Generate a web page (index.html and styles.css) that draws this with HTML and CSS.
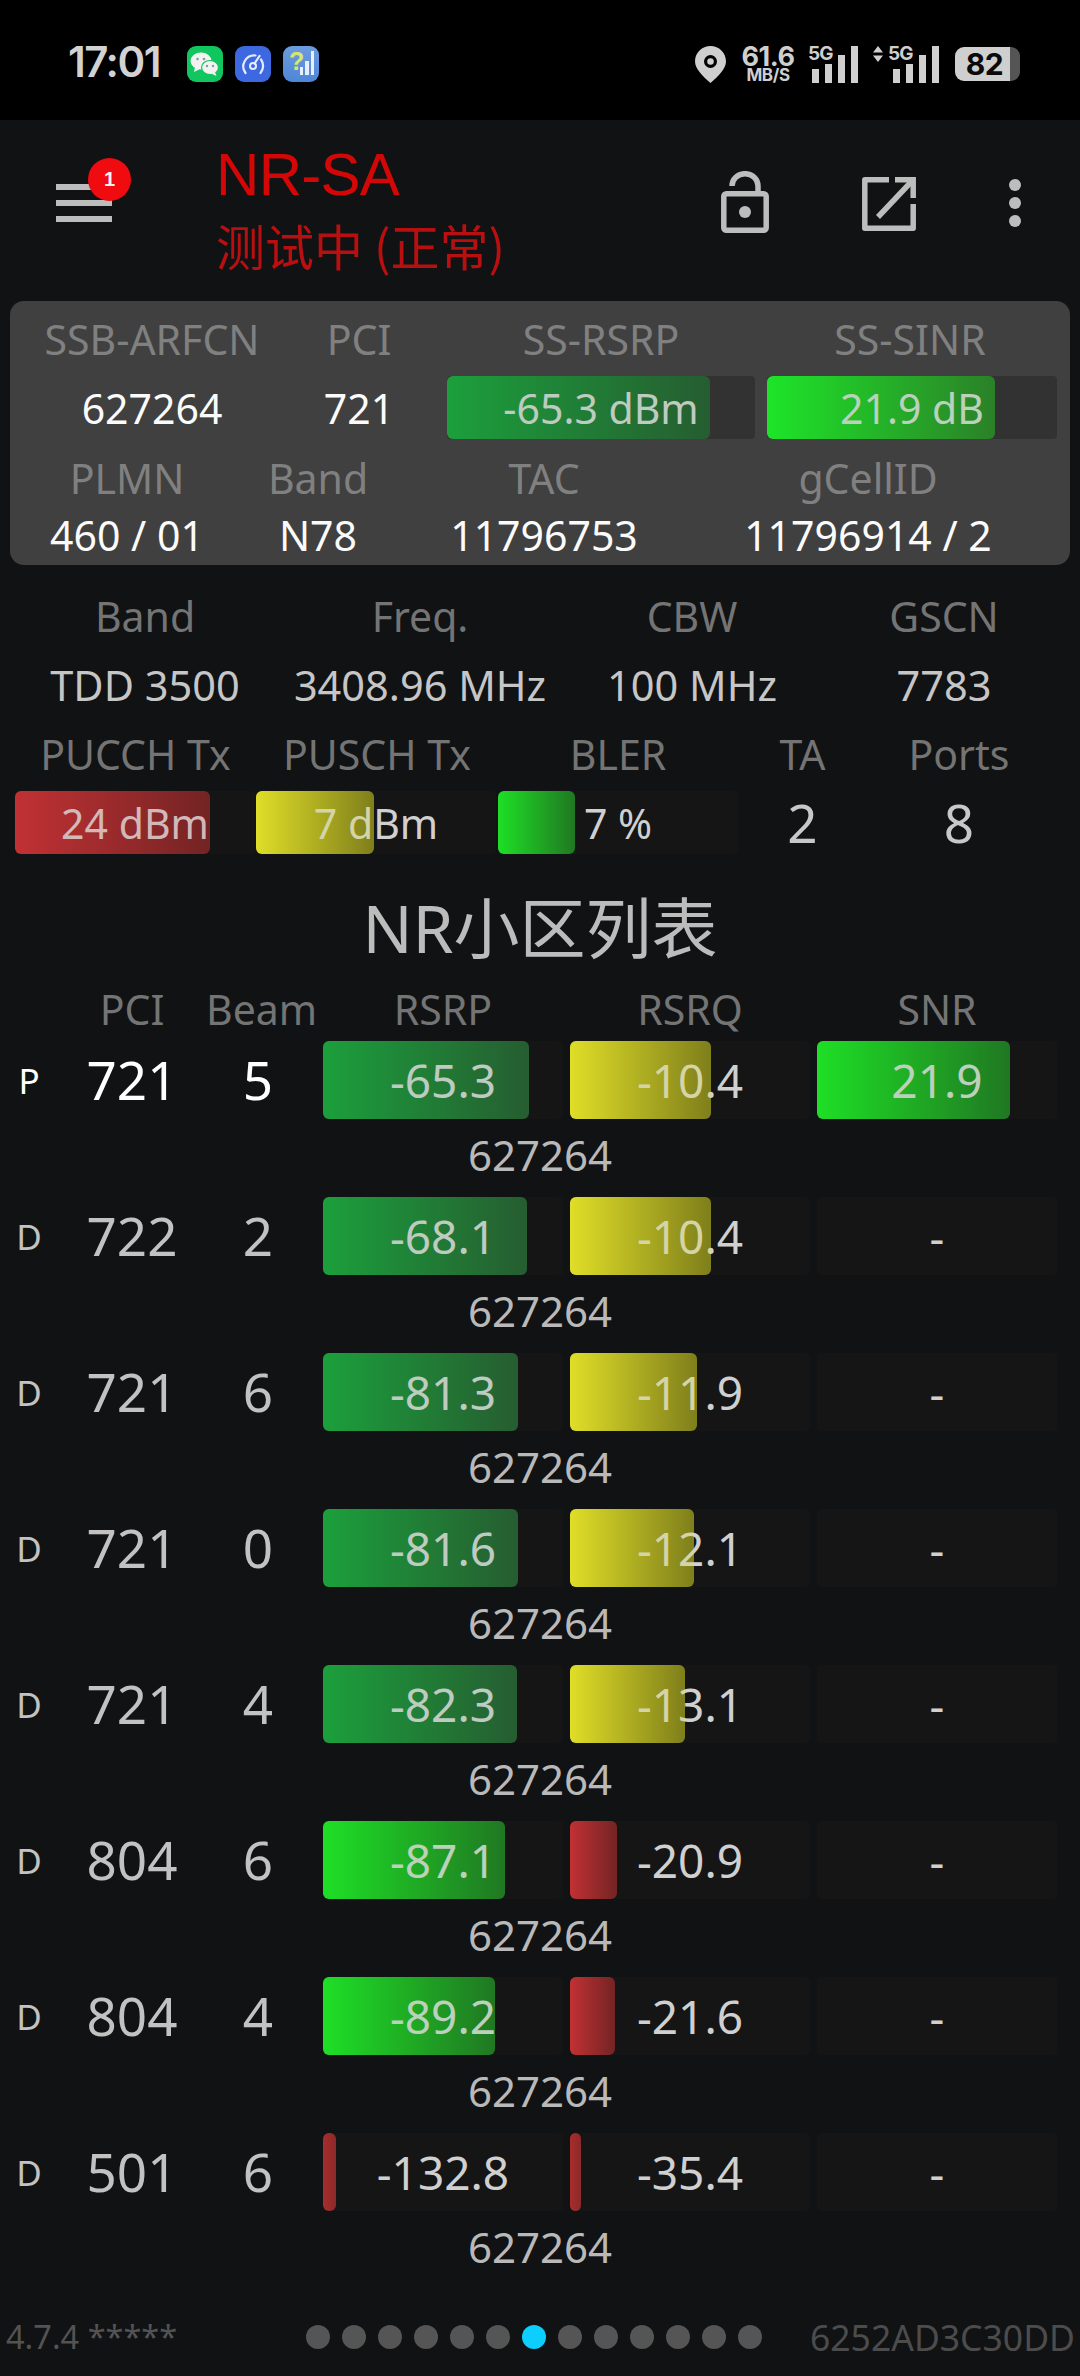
FILE: index.html
```html
<!DOCTYPE html>
<html lang="zh">
<head>
<meta charset="utf-8">
<title>NR-SA</title>
<link rel="stylesheet" href="styles.css">
</head>
<body>
<div class="page">
  <header class="status">
    <div class="status-left">
      <span class="time">17:01</span>
      <div class="apps">
        <svg class="app" viewBox="0 0 36 36"><rect width="36" height="36" rx="9" fill="#12c65f"/><ellipse cx="14" cy="15" rx="10.500" ry="8.500" fill="#f2f2f2"/><path d="M8 21l-1 5 6-3z" fill="#f2f2f2"/><ellipse cx="23" cy="21.500" rx="8.500" ry="7" fill="#f2f2f2" stroke="#12c65f" stroke-width="1.200"/><path d="M28 26l1.500 4-5.500-2.500z" fill="#f2f2f2"/><circle cx="10.500" cy="13" r="1.300" fill="#8a9a90"/><circle cx="17" cy="13" r="1.300" fill="#8a9a90"/><circle cx="20" cy="20" r="1.200" fill="#8a9a90"/><circle cx="26" cy="20" r="1.200" fill="#8a9a90"/></svg>
        <svg class="app" viewBox="0 0 36 36"><rect width="36" height="36" rx="9" fill="#3d68e0"/><path d="M10.500 27a11 11 0 0 1 10-17.500M26 13.500a11 11 0 0 1-.5 13.500" fill="none" stroke="#e6ecff" stroke-width="2.200" stroke-linecap="round"/><circle cx="18" cy="20" r="3" fill="none" stroke="#e6ecff" stroke-width="2"/><path d="M19.500 17.500l5-7.500" stroke="#e6ecff" stroke-width="2.200" stroke-linecap="round"/></svg>
        <div class="app app-net">
          <span class="q">?</span>
          <i class="nb nb1"></i><i class="nb nb2"></i><i class="nb nb3"></i>
        </div>
      </div>
    </div>
    <div class="status-right">
      <svg class="pin" viewBox="0 0 31 37"><path fill-rule="evenodd" fill="#cfcfcf" d="M15.500 0C7 0 0 6.800 0 15.300 0 23 8 30.500 15.500 37 23 30.500 31 23 31 15.300 31 6.800 24 0 15.500 0zm0 9a6.500 6.500 0 1 1 0 13 6.500 6.500 0 0 1 0-13zm0 3.200a3.300 3.300 0 1 0 0 6.600 3.300 3.300 0 0 0 0-6.600z"/></svg>
      <div class="speed"><span class="speed-n">61.6</span><span class="speed-u">MB/S</span></div>
      <div class="sig">
        <span class="g5">5G</span>
        <div class="bars"><i class="b1"></i><i class="b2"></i><i class="b3"></i><i class="b4"></i></div>
      </div>
      <div class="sig sig2">
        <svg class="updn" viewBox="0 0 10 16"><path d="M5 0l5 6.500H0zM5 16l5-6.500H0z" fill="#cfcfcf"/></svg>
        <span class="g5">5G</span>
        <div class="bars"><i class="b1"></i><i class="b2"></i><i class="b3"></i><i class="b4"></i></div>
      </div>
      <div class="batt"><span class="batt-n">82</span></div>
    </div>
  </header>

  <div class="appbar">
    <div class="menu">
      <span class="ham"><i></i><i></i><i></i></span>
      <span class="badge">1</span>
    </div>
    <div class="titles">
      <div class="title">NR-SA</div>
      <div class="subtitle">测试中 (正常)</div>
    </div>
    <div class="actions">
      <svg class="ic-lock" viewBox="0 0 48 62"><path d="M11 15a13 12.300 0 0 1 26 0v8" fill="none" stroke="#bdbdbd" stroke-width="5.500"/><rect x="2.800" y="22.800" width="42.400" height="36.400" rx="2.500" fill="none" stroke="#bdbdbd" stroke-width="5.500"/><circle cx="24" cy="41" r="6" fill="#bdbdbd"/></svg>
      <svg class="ic-open" viewBox="0 0 54 54"><path d="M27 2.800H2.800v48.400h48.400V27" fill="none" stroke="#bdbdbd" stroke-width="5.500" stroke-linejoin="round"/><path d="M33 2.800h18.200V21" fill="none" stroke="#bdbdbd" stroke-width="5.500"/><path d="M49.500 4.500L16 40" fill="none" stroke="#bdbdbd" stroke-width="5.500"/></svg>
      <span class="kebab"><i></i><i></i><i></i></span>
    </div>
  </div>

  <section class="card">
    <div class="g1">
      <div class="lab">SSB-ARFCN</div><div class="lab">PCI</div><div class="lab">SS-RSRP</div><div class="lab">SS-SINR</div>
      <div class="v">627264</div><div class="v">721</div>
      <div class="track t-card c-green" style="--w:263px"><span>-65.3 dBm</span></div>
      <div class="track t-card c-lime" style="--w:228px"><span>21.9 dB</span></div>
    </div>
    <div class="g2">
      <div class="lab">PLMN</div><div class="lab">Band</div><div class="lab">TAC</div><div class="lab">gCellID</div>
      <div class="v">460 / 01</div><div class="v">N78</div><div class="v">11796753</div><div class="v">11796914 / 2</div>
    </div>
  </section>

  <section class="info">
    <div class="g3">
      <div class="lab">Band</div><div class="lab">Freq.</div><div class="lab">CBW</div><div class="lab">GSCN</div>
      <div class="v2">TDD 3500</div><div class="v2">3408.96 MHz</div><div class="v2">100 MHz</div><div class="v2">7783</div>
    </div>
    <div class="g4">
      <div class="lab">PUCCH Tx</div><div class="lab">PUSCH Tx</div><div class="lab">BLER</div><div class="lab">TA</div><div class="lab">Ports</div>
      <div class="track c-red" style="--w:195px"><span>24 dBm</span></div>
      <div class="track c-yellow" style="--w:118px"><span>7 dBm</span></div>
      <div class="track c-lime2" style="--w:77px"><span>7 %</span></div>
      <div class="big">2</div><div class="big">8</div>
    </div>
  </section>

  <h1 class="list-title">NR小区列表</h1>

  <section class="cells">
    <div class="row head">
      <div></div><div class="lab">PCI</div><div class="lab">Beam</div><div class="lab">RSRP</div><div class="lab">RSRQ</div><div class="lab">SNR</div>
    </div>

    <div class="row prim">
      <div class="kind">P</div><div class="num">721</div><div class="num">5</div>
      <div class="track t-row c-green" style="--w:206px"><span>-65.3</span></div>
      <div class="track t-row c-yellow" style="--w:141px"><span>-10.4</span></div>
      <div class="track t-row c-lime2" style="--w:193px"><span>21.9</span></div>
    </div>
    <div class="sub">627264</div>

    <div class="row">
      <div class="kind">D</div><div class="num">722</div><div class="num">2</div>
      <div class="track t-row c-green" style="--w:204px"><span>-68.1</span></div>
      <div class="track t-row c-yellow" style="--w:141px"><span>-10.4</span></div>
      <div class="track t-row"><span>-</span></div>
    </div>
    <div class="sub">627264</div>

    <div class="row">
      <div class="kind">D</div><div class="num">721</div><div class="num">6</div>
      <div class="track t-row c-green" style="--w:195px"><span>-81.3</span></div>
      <div class="track t-row c-yellow" style="--w:127px"><span>-11.9</span></div>
      <div class="track t-row"><span>-</span></div>
    </div>
    <div class="sub">627264</div>

    <div class="row">
      <div class="kind">D</div><div class="num">721</div><div class="num">0</div>
      <div class="track t-row c-green" style="--w:195px"><span>-81.6</span></div>
      <div class="track t-row c-yellow" style="--w:124px"><span>-12.1</span></div>
      <div class="track t-row"><span>-</span></div>
    </div>
    <div class="sub">627264</div>

    <div class="row">
      <div class="kind">D</div><div class="num">721</div><div class="num">4</div>
      <div class="track t-row c-green" style="--w:194px"><span>-82.3</span></div>
      <div class="track t-row c-yellow" style="--w:115px"><span>-13.1</span></div>
      <div class="track t-row"><span>-</span></div>
    </div>
    <div class="sub">627264</div>

    <div class="row">
      <div class="kind">D</div><div class="num">804</div><div class="num">6</div>
      <div class="track t-row c-lime2" style="--w:182px"><span>-87.1</span></div>
      <div class="track t-row c-red" style="--w:47px"><span>-20.9</span></div>
      <div class="track t-row"><span>-</span></div>
    </div>
    <div class="sub">627264</div>

    <div class="row">
      <div class="kind">D</div><div class="num">804</div><div class="num">4</div>
      <div class="track t-row c-lime2" style="--w:172px"><span>-89.2</span></div>
      <div class="track t-row c-red" style="--w:45px"><span>-21.6</span></div>
      <div class="track t-row"><span>-</span></div>
    </div>
    <div class="sub">627264</div>

    <div class="row">
      <div class="kind">D</div><div class="num">501</div><div class="num">6</div>
      <div class="track t-row c-thin" style="--w:13px"><span>-132.8</span></div>
      <div class="track t-row c-thin" style="--w:11px"><span>-35.4</span></div>
      <div class="track t-row"><span>-</span></div>
    </div>
    <div class="sub">627264</div>
  </section>

  <footer class="foot">
    <span class="ver">4.7.4 *****</span>
    <div class="dots"><i></i><i></i><i></i><i></i><i></i><i></i><i class="on"></i><i></i><i></i><i></i><i></i><i></i><i></i></div>
    <span class="dev">6252AD3C30DD</span>
  </footer>
</div>
</body>
</html>
```
FILE: styles.css
```css
* { box-sizing: border-box; }
html, body { margin: 0; padding: 0; background: #111; }
body { font-family: "Noto Sans", "Noto Sans CJK SC", sans-serif; }
.page { width: 1080px; height: 2376px; overflow: hidden; background: #111213; display: flex; flex-direction: column; }
i { display: block; }

/* status bar */
.status { height: 120px; flex: none; background: #000; display: flex; justify-content: space-between; align-items: center; padding: 8px 60px 0 68px; }
.status-left { display: flex; align-items: center; gap: 26px; }
.time { font-family: Inter, sans-serif; font-weight: 600; font-size: 42px; line-height: 48px; color: #d2d2d2; letter-spacing: -1.500px; width: 93px; margin-top: -4px; white-space: nowrap; }
.apps { display: flex; gap: 12px; }
.app { width: 36px; height: 36px; display: block; }
.app-net { position: relative; border-radius: 9px; background: linear-gradient(180deg, #6d9bdf, #4f86d8); display: flex; align-items: flex-end; gap: 2px; padding: 0 5px 7px 17px; }
.q { position: absolute; left: 6px; top: 0; font-family: "Liberation Sans", sans-serif; font-weight: 700; font-size: 25px; line-height: 30px; color: #d6e86a; }
.nb { width: 3.500px; background: #e8f0ff; }
.nb1 { height: 8px; } .nb2 { height: 14px; } .nb3 { height: 24px; }
.status-right { display: flex; align-items: center; height: 40px; color: #cfcfcf; font-family: Inter, sans-serif; }
.pin { width: 31px; height: 37px; margin-right: 15px; }
.speed { display: flex; flex-direction: column; align-items: center; width: 54px; margin-right: 13px; }
.speed-n { font-size: 27px; font-weight: 700; line-height: 23px; letter-spacing: -.500px; }
.speed-u { font-size: 17px; font-weight: 700; line-height: 15px; letter-spacing: -.400px; }
.sig { position: relative; display: flex; align-items: flex-end; width: 50px; height: 37px; margin-right: 15px; }
.sig2 { width: 66px; padding-left: 16px; margin-right: 16px; }
.g5 { position: absolute; top: -2px; left: 0; font-size: 19px; font-weight: 700; line-height: 20px; letter-spacing: -1px; }
.sig2 .g5 { left: 15px; }
.updn { position: absolute; left: 0; top: 0; width: 10px; height: 16px; }
.bars { display: flex; align-items: flex-end; gap: 6px; height: 37px; margin-left: auto; }
.bars i { width: 7px; background: #cfcfcf; }
.b1 { height: 14px; } .b2 { height: 19px; } .b3 { height: 28px; } .b4 { height: 37px; }
.batt { width: 65px; height: 34px; border-radius: 9px; background: linear-gradient(90deg, #cfcfcf 84%, #555 84%); display: flex; align-items: center; justify-content: center; padding-right: 6px; }
.batt-n { font-size: 30px; font-weight: 700; color: #0a0a0a; letter-spacing: -.500px; }

/* app bar */
.appbar { height: 181px; flex: none; position: relative; display: flex; align-items: flex-start; padding-left: 56px; }
.menu { position: relative; width: 160px; padding-top: 64px; }
.ham { display: flex; flex-direction: column; gap: 10px; width: 56px; }
.ham i { height: 6px; background: #bdbdbd; }
.badge { position: absolute; left: 32px; top: 38px; width: 43px; height: 43px; border-radius: 50%; background: #f00b10; color: #f4f4f4; font: 700 20px/43px "Liberation Sans", sans-serif; text-align: center; }
.titles { padding-top: 22px; }
.title { font-family: "Liberation Sans", sans-serif; font-size: 60px; line-height: 66px; color: #d40707; letter-spacing: -.700px; }
.subtitle { font-family: "Noto Sans CJK SC", sans-serif; font-weight: 400; font-size: 49px; line-height: 58px; color: #b81010; margin-top: 8px; white-space: nowrap; }
.actions { position: absolute; left: 721px; top: 51px; display: flex; align-items: center; }
.ic-lock { width: 48px; height: 62px; margin-right: 93px; }
.ic-open { width: 54px; height: 54px; margin-top: 4px; margin-right: 93px; }
.kebab { display: flex; flex-direction: column; gap: 6px; margin-top: 1px; }
.kebab i { width: 12px; height: 12px; border-radius: 50%; background: #bdbdbd; }

/* shared */
.lab { color: #747474; font-size: 41px; line-height: 52px; text-align: center; white-space: nowrap; }
.track { position: relative; z-index: 0; width: 240px; height: 63px; border-radius: 4px; background: #151516; display: flex; align-items: center; justify-content: center; color: #d0d0d0; font-size: 41px; white-space: nowrap; }
.track span { position: relative; z-index: 1; }
.track::before, .track::after { content: ""; position: absolute; left: 0; top: 0; bottom: 0; width: var(--w, 0); border-radius: 6px; }
.track::before { z-index: 0; background: linear-gradient(90deg, var(--a), var(--b)); }
.track::after { z-index: 2; background: var(--t); }
.c-green { --a: #1c9f3b; --b: #27552f; --t: rgba(30,170,70,.1); }
.c-lime { --a: #1de628; --b: #2c7427; --t: rgba(40,220,50,.12); }
.c-lime2 { --a: #1de025; --b: #1f6a20; --t: rgba(40,220,50,.12); }
.c-yellow { --a: #e0de28; --b: #5f5f18; --t: rgba(225,225,40,.25); }
.c-red { --a: #bb2f32; --b: #5e1f20; --t: rgba(230,60,60,.16); }
.c-thin { --a: #a82c2c; --b: #8c2a2a; --t: transparent; }

/* summary card */
.card { flex: none; height: 264px; margin: 0 10px; background: #404040; border-radius: 14px; }
.card .lab { color: #808080; }
.v { color: #fbfbfb; font-size: 41px; line-height: 52px; text-align: center; white-space: nowrap; }
.g1 { display: grid; grid-template-columns: 284px 130px 331px 300px; grid-template-rows: 75px 63px; align-items: center; }
.g1 .lab:nth-child(3) { padding-left: 23px; }
.g1 .lab:nth-child(4) { padding-left: 10px; }
.t-card { height: 63px; background: #323232; }
.g1 .track:nth-child(7) { width: 308px; margin-left: 23px; }
.g1 .track:nth-child(8) { width: 290px; margin-left: 12px; }
.g2 { display: grid; grid-template-columns: 234px 148px 304px 344px; grid-template-rows: 78px 36px; align-items: center; }
.g2 .v { line-height: 36px; }

/* info */
.info { flex: none; padding: 25px 0 0; }
.g3 { display: grid; grid-template-columns: 290px 260px 284px 220px; grid-template-rows: 52px 52px; row-gap: 17px; align-items: center; }
.v2 { color: #c6c6c6; font-size: 41.500px; line-height: 52px; text-align: center; white-space: nowrap; }
.g4 { display: grid; grid-template-columns: 241px 242px 240px 129px 184px; grid-template-rows: 52px 63px; row-gap: 11px; padding: 17px 0 0 15px; align-items: center; }
.big { color: #c8c8c8; font-size: 53px; line-height: 63px; text-align: center; }

.list-title { flex: none; margin: 36px 0 0; color: #bcbcbc; font-weight: 400; font-size: 66px; line-height: 74px; text-align: center; font-family: "Noto Sans", "Noto Sans CJK SC", sans-serif; }

/* cell list */
.cells { flex: none; margin-top: 19px; }
.row { display: grid; grid-template-columns: 58px 148px 117px 247px 247px 240px; align-items: center; }
.head { height: 52px; margin-bottom: 6px; }
.head .lab:nth-child(3) { padding-right: 13px; }
.head .lab:nth-child(n+4) { width: 240px; }
.row:not(.head) { height: 78px; }
.kind { color: #c2c2c2; font-size: 35px; text-align: center; }
.num { color: #c2c2c2; font-size: 53px; line-height: 78px; text-align: center; }
.num:nth-child(3) { padding-right: 13px; }
.prim .kind, .prim .num { color: #fff; }
.t-row { height: 78px; font-size: 46px; }
.sub { height: 78px; padding-bottom: 8px; display: flex; align-items: center; justify-content: center; color: #b9b9b9; font-size: 42px; }

/* footer */
.foot { flex: none; margin-top: 18px; position: relative; height: 60px; display: flex; align-items: center; justify-content: center; padding-right: 12px; }
.ver { position: absolute; left: 6px; top: 6px; color: #535353; font-size: 32.500px; line-height: 48px; }
.dev { position: absolute; right: 5px; top: 6px; color: #4c4c4c; font-size: 35.500px; line-height: 48px; }
.dots { display: flex; gap: 12px; }
.dots i { width: 24px; height: 24px; border-radius: 50%; background: #555; }
.dots .on { background: #0ccfff; }
```
